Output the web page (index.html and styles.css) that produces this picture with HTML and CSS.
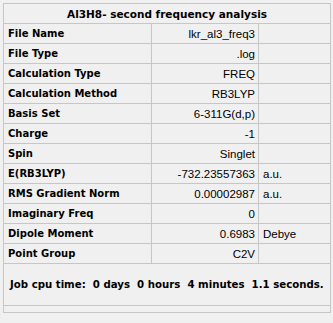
FILE: index.html
```html
<!DOCTYPE html>
<html lang="en">
<head>
<meta charset="UTF-8">
<title>Al3H8- second frequency analysis</title>
<link rel="stylesheet" href="styles.css">
</head>
<body>
<div class="panel">
  <table class="summary">
    <colgroup>
      <col class="col-label">
      <col class="col-value">
      <col class="col-unit">
    </colgroup>
    <tr class="title-row">
      <th colspan="3">Al3H8- second frequency analysis</th>
    </tr>
    <tr><td class="label">File Name</td><td class="value">lkr_al3_freq3</td><td class="unit"></td></tr>
    <tr><td class="label">File Type</td><td class="value">.log</td><td class="unit"></td></tr>
    <tr><td class="label">Calculation Type</td><td class="value">FREQ</td><td class="unit"></td></tr>
    <tr><td class="label">Calculation Method</td><td class="value">RB3LYP</td><td class="unit"></td></tr>
    <tr><td class="label">Basis Set</td><td class="value">6-311G(d,p)</td><td class="unit"></td></tr>
    <tr><td class="label">Charge</td><td class="value">-1</td><td class="unit"></td></tr>
    <tr><td class="label">Spin</td><td class="value">Singlet</td><td class="unit"></td></tr>
    <tr><td class="label">E(RB3LYP)</td><td class="value">-732.23557363</td><td class="unit">a.u.</td></tr>
    <tr><td class="label">RMS Gradient Norm</td><td class="value">0.00002987</td><td class="unit">a.u.</td></tr>
    <tr><td class="label">Imaginary Freq</td><td class="value">0</td><td class="unit"></td></tr>
    <tr><td class="label">Dipole Moment</td><td class="value">0.6983</td><td class="unit">Debye</td></tr>
    <tr><td class="label">Point Group</td><td class="value">C2V</td><td class="unit"></td></tr>
    <tr class="cpu-row">
      <td colspan="3">Job cpu time:  0 days  0 hours  4 minutes  1.1 seconds.</td>
    </tr>
    <tr class="end-row"><td colspan="3"></td></tr>
  </table>
</div>
</body>
</html>
```

FILE: styles.css
```css
body {
  margin: 0;
  background-color: #f0f0f0;
  font-family: "Liberation Sans", Arial, sans-serif;
  font-size: 11.5px;
  color: #000;
}
.panel {
  padding: 3px;
}
.summary {
  width: 327px;
  table-layout: fixed;
  border-collapse: collapse;
  border: 1px solid #8c8c8c;
}
.col-label { width: 148px; }
.col-value { width: 107px; }
.col-unit { width: 72px; }
.summary td, .summary th {
  border: 1px solid #c6c6c6;
  padding: 0;
  white-space: pre;
  overflow: hidden;
}
.summary tr {
  height: 20px;
}
/* bold captions use a wider face */
.title-row th, .label, .cpu-row td {
  font-family: "DejaVu Sans", Verdana, sans-serif;
  font-weight: bold;
}
.title-row {
  height: 28px;
}
.title-row th {
  font-size: 10.5px;
  text-align: center;
}
.label {
  font-size: 10px;
  padding-left: 4px !important;
}
.value {
  text-align: right;
  padding-right: 3px !important;
}
.unit {
  padding-left: 4px !important;
}
.summary .cpu-row {
  height: 42px;
}
.cpu-row td {
  font-size: 10.2px;
  padding-left: 6px;
}
.summary .end-row {
  height: 7px;
}
```
